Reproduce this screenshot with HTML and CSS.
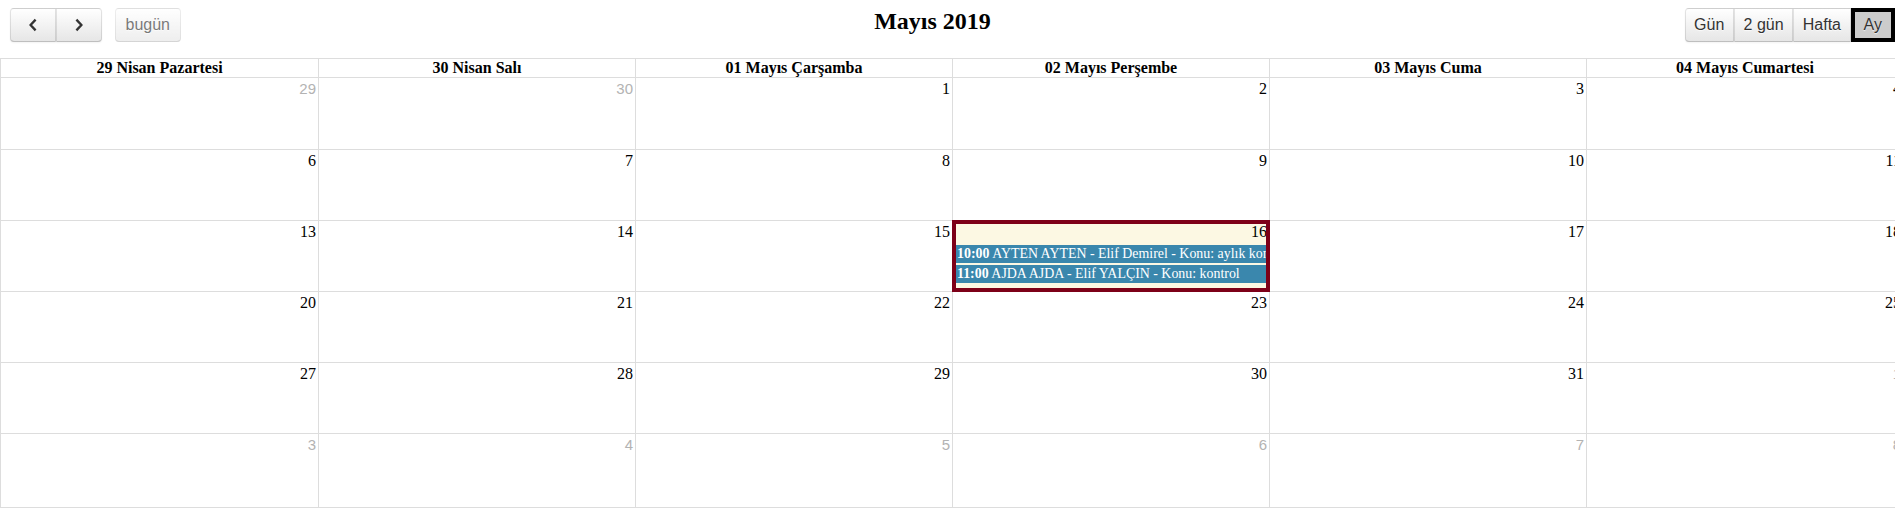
FILE: index.html
```html
<!DOCTYPE html>
<html lang="tr">
<head>
<meta charset="utf-8">
<title>Takvim</title>
<link rel="stylesheet" href="styles.css">
</head>
<body>
<div class="cal">
  <div class="toolbar">
    <div class="tb-left">
      <div class="btn-group">
        <button class="btn btn-first btn-icon" aria-label="önceki">
          <svg width="10" height="14" viewBox="0 0 10 14"><polyline points="7.6,1.6 2.6,7 7.6,12.4" fill="none" stroke="#333" stroke-width="2.3"/></svg>
        </button>
        <button class="btn btn-last btn-icon" aria-label="sonraki">
          <svg width="10" height="14" viewBox="0 0 10 14"><polyline points="2.4,1.6 7.4,7 2.4,12.4" fill="none" stroke="#333" stroke-width="2.3"/></svg>
        </button>
      </div>
      <button class="btn btn-single btn-disabled">bugün</button>
    </div>
    <div class="tb-center"><h2 class="title">Mayıs 2019</h2></div>
    <div class="tb-right">
      <div class="btn-group">
        <button class="btn btn-first">Gün</button>
        <button class="btn">2 gün</button>
        <button class="btn">Hafta</button>
        <button class="btn btn-last btn-active">Ay</button>
      </div>
    </div>
  </div>

  <div class="grid">
    <div class="head">29 Nisan Pazartesi</div>
    <div class="head">30 Nisan Salı</div>
    <div class="head">01 Mayıs Çarşamba</div>
    <div class="head">02 Mayıs Perşembe</div>
    <div class="head">03 Mayıs Cuma</div>
    <div class="head">04 Mayıs Cumartesi</div>

    <div class="day"><span class="num other">29</span></div>
    <div class="day"><span class="num other">30</span></div>
    <div class="day"><span class="num">1</span></div>
    <div class="day"><span class="num">2</span></div>
    <div class="day"><span class="num">3</span></div>
    <div class="day"><span class="num">4</span></div>

    <div class="day"><span class="num">6</span></div>
    <div class="day"><span class="num">7</span></div>
    <div class="day"><span class="num">8</span></div>
    <div class="day"><span class="num">9</span></div>
    <div class="day"><span class="num">10</span></div>
    <div class="day"><span class="num">11</span></div>

    <div class="day"><span class="num">13</span></div>
    <div class="day"><span class="num">14</span></div>
    <div class="day"><span class="num">15</span></div>
    <div class="day today">
      <span class="num">16</span>
      <div class="event"><b>10:00</b> AYTEN AYTEN - Elif Demirel - Konu: aylık kontrol</div>
      <div class="event"><b>11:00</b> AJDA AJDA - Elif YALÇIN - Konu: kontrol</div>
    </div>
    <div class="day"><span class="num">17</span></div>
    <div class="day"><span class="num">18</span></div>

    <div class="day"><span class="num">20</span></div>
    <div class="day"><span class="num">21</span></div>
    <div class="day"><span class="num">22</span></div>
    <div class="day"><span class="num">23</span></div>
    <div class="day"><span class="num">24</span></div>
    <div class="day"><span class="num">25</span></div>

    <div class="day"><span class="num">27</span></div>
    <div class="day"><span class="num">28</span></div>
    <div class="day"><span class="num">29</span></div>
    <div class="day"><span class="num">30</span></div>
    <div class="day"><span class="num">31</span></div>
    <div class="day"><span class="num other">1</span></div>

    <div class="day"><span class="num other">3</span></div>
    <div class="day"><span class="num other">4</span></div>
    <div class="day"><span class="num other">5</span></div>
    <div class="day"><span class="num other">6</span></div>
    <div class="day"><span class="num other">7</span></div>
    <div class="day"><span class="num other">8</span></div>
  </div>
</div>
</body>
</html>
```

FILE: styles.css
```css
html, body {
  margin: 0;
  padding: 0;
  overflow: hidden;
  background: #fff;
}

body {
  font-family: "Liberation Serif", "Times New Roman", serif;
  font-size: 16px;
  color: #000;
}

.cal {
  width: 1903px;
}

/* ---------- toolbar ---------- */
.toolbar {
  width: 1895px;
  box-sizing: border-box;
  display: flex;
  align-items: flex-start;
  padding: 8px 0 0 10px;
  margin-bottom: 16px;
}

.tb-left,
.tb-right {
  display: flex;
  align-items: flex-start;
  gap: 13px;
}

.tb-center {
  flex: 1;
  text-align: center;
}

.title {
  margin: 0;
  font-size: 24px;
  font-weight: bold;
  line-height: 27px;
  font-family: "Liberation Serif", "Times New Roman", serif;
}

.btn-group {
  display: flex;
}

.btn {
  height: 34px;
  box-sizing: border-box;
  margin: 0;
  padding: 0 8.6px;
  display: inline-flex;
  align-items: center;
  justify-content: center;
  font-family: "Liberation Sans", Arial, sans-serif;
  font-size: 16px;
  color: #333;
  background-color: #f5f5f5;
  background-image: linear-gradient(to bottom, #ffffff, #e6e6e6);
  border: 1px solid;
  border-color: rgba(0,0,0,.1) rgba(0,0,0,.1) rgba(0,0,0,.25);
  border-radius: 0;
  box-shadow: inset 0 1px 0 rgba(255,255,255,.2), 0 1px 2px rgba(0,0,0,.05);
  text-shadow: 0 1px 1px rgba(255,255,255,.75);
  cursor: pointer;
}

.btn-icon {
  width: 46px;
  padding: 0;
}

.btn-first {
  border-top-left-radius: 4px;
  border-bottom-left-radius: 4px;
}

.btn-last {
  border-top-right-radius: 4px;
  border-bottom-right-radius: 4px;
}

.btn-single {
  border-radius: 4px;
  padding: 0 9.5px;
}

.btn-disabled {
  opacity: .65;
  box-shadow: none;
  cursor: default;
}

.btn-active {
  background-color: #cccccc;
  background-image: none;
  border: 1px solid #000;
  border-radius: 0;
  box-shadow: inset 0 0 0 3px #000;
  padding: 0 12px;
}

/* ---------- grid ---------- */
.grid {
  display: grid;
  grid-template-columns: 318px 317px 317px 317px 317px 317px;
  grid-template-rows: 19px 72px 71px 71px 71px 71px 74px;
  border-top: 1px solid #ddd;
  border-left: 1px solid #ddd;
  width: 1902px;
}

.head,
.day {
  box-sizing: border-box;
  border-right: 1px solid #ddd;
  border-bottom: 1px solid #ddd;
  min-width: 0;
}

.head {
  text-align: center;
  font-weight: bold;
  font-size: 16px;
  line-height: 18px;
  white-space: nowrap;
  overflow: hidden;
}

.day {
  display: flex;
  flex-direction: column;
  align-items: stretch;
  position: relative;
}

.num {
  align-self: flex-end;
  padding: 2px 2px 2px;
  line-height: 18px;
  font-size: 16px;
  color: #000;
}

.num.other {
  font-family: "Liberation Sans", Arial, sans-serif;
  font-size: 15px;
  color: #b3b3b3;
}

.today {
  background: #fcf8e3;
}

.today::after {
  content: "";
  position: absolute;
  top: -1px;
  left: -1px;
  right: -1px;
  bottom: -1px;
  border: 4px solid #7d0018;
  pointer-events: none;
  z-index: 2;
}

.event {
  margin: 2px 2px 0;
  height: 18px;
  line-height: 18px;
  padding: 0 0 0 2px;
  background: #3a87ad;
  color: #fff;
  font-size: 13.9px;
  white-space: nowrap;
  overflow: hidden;
}

.event + .event {
  margin-top: 2px;
}
```
